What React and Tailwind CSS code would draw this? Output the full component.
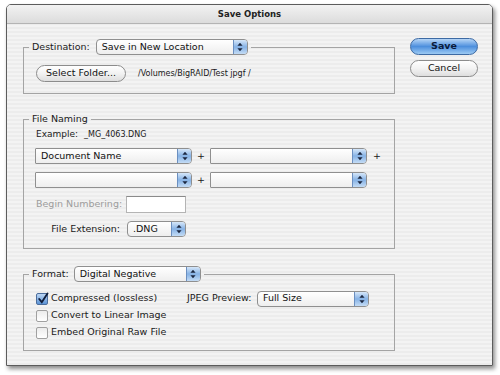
import React from "react";

function Arrows() {
  return (
    <svg width="6" height="10" viewBox="0 0 6 10">
      <path d="M3 0.8 L5.6 3.8 H0.4Z M3 9.2 L5.6 6.2 H0.4Z" fill="#1b2740" />
    </svg>
  );
}

function Popup({ className, text, square }) {
  return (
    <div
      className={`flex items-stretch overflow-hidden border border-[#8f8f8f] bg-linear-to-b from-white to-[#eeeeee] ${
        square ? "rounded-l-[1px] rounded-r-[4px]" : "rounded-[4px]"
      } ${className}`}
    >
      <div className="flex-1 flex items-center pl-[5px] whitespace-nowrap text-[#111]">{text}</div>
      <div className="w-[14px] flex items-center justify-center border-l border-[#6b8fc0] bg-linear-to-b from-[#d6e7f9] via-[#86b2e5] to-[#c4dcf5]">
        <Arrows />
      </div>
    </div>
  );
}

function Check({ checked }) {
  if (checked)
    return (
      <div className="relative w-[12px] h-[12px] rounded-[2px] border border-[#4b6d9c] bg-linear-to-b from-[#bcd6f3] to-[#5b93d6]">
        <svg className="absolute left-[0px] top-[-2px]" width="12" height="13" viewBox="0 0 12 13">
          <path d="M2.2 7 L4.8 10.2 L10.5 1.5" fill="none" stroke="#0f1d3a" strokeWidth="1.9" strokeLinecap="round" />
        </svg>
      </div>
    );
  return <div className="w-[12px] h-[12px] rounded-[2px] border border-[#a0a0a0] bg-linear-to-b from-[#ececec] to-white" />;
}

function PillButton({ className, children, blue }) {
  return (
    <div
      className={`flex items-center justify-center rounded-full border ${
        blue
          ? "border-[#3d6aa3] bg-linear-to-b from-[#b7d6f6] via-[#4d8fdd] to-[#9ccaf3] font-bold text-[#0b1b3c]"
          : "border-[#8c8c8c] bg-linear-to-b from-white via-[#f2f2f2] to-[#dedede] text-[#111]"
      } ${className}`}
    >
      {children}
    </div>
  );
}

export default function App() {
  return (
    <div className="w-[500px] h-[375px] bg-white pl-[6px] pt-[4px] font-['DejaVu_Sans',sans-serif] text-[9.5px] text-[#1a1a1a]">
      <div className="w-[487px] h-[362px] flex flex-col border border-[#5c5c5c] rounded-t-[5px] overflow-hidden shadow-[2px_3px_4px_rgba(0,0,0,0.45)]">
        {/* title bar */}
        <div className="h-[19px] flex items-center justify-center border-b border-[#b4b4b4] bg-linear-to-b from-[#f2f2f2] to-[#dcdcdc] font-bold text-[8.5px] text-[#222]">
          Save Options
        </div>

        {/* body */}
        <div className="flex-1 flex pl-[16px] pt-[15px] bg-[repeating-linear-gradient(0deg,#ececec_0px,#ececec_2px,#f3f3f3_2px,#f3f3f3_4px)]">
          <div className="w-[372px] flex flex-col">
            {/* Destination */}
            <fieldset className="border border-[#a4a4a4] pl-[5px] pb-[11px]">
              <legend className="px-[3px]">
                <div className="flex items-center h-[16px]">
                  <span>Destination:</span>
                  <Popup className="ml-[6px] w-[152px] h-[16px]" text="Save in New Location" />
                </div>
              </legend>
              <div className="flex items-center mt-[10px] ml-[7px]">
                <PillButton className="w-[90px] h-[17px]">Select Folder...</PillButton>
                <span className="ml-[12px] text-[8px]">/Volumes/BigRAID/Test jpgf /</span>
              </div>
            </fieldset>

            {/* File Naming */}
            <fieldset className="mt-[19px] border border-[#a4a4a4] pl-[5px] pb-[11px]">
              <legend className="px-[3px] leading-[12px]">File Naming</legend>
              <div className="ml-[6px]">
                <div className="flex items-center h-[12px] mt-[4px] pl-[1px]">
                  <span className="text-[9px]">Example:</span>
                  <span className="ml-[6px] text-[8px]">_MG_4063.DNG</span>
                </div>
                <div className="flex items-center mt-[7px]">
                  <Popup square className="w-[157px] h-[16px]" text="Document Name" />
                  <span className="w-[18px] text-center">+</span>
                  <Popup square className="w-[157px] h-[16px]" text="" />
                  <span className="w-[20px] text-center">+</span>
                </div>
                <div className="flex items-center mt-[8px]">
                  <Popup square className="w-[157px] h-[16px]" text="" />
                  <span className="w-[18px] text-center">+</span>
                  <Popup square className="w-[157px] h-[16px]" text="" />
                </div>
                <div className="flex items-center mt-[8px] pl-[1px]">
                  <span className="w-[90px] text-[#9c9c9c]">Begin Numbering:</span>
                  <div className="w-[60px] h-[17px] bg-white border border-[#b4b4b4] border-t-[#8a8a8a]" />
                </div>
                <div className="flex items-center mt-[8px]">
                  <span className="w-[85px] text-right">File Extension:</span>
                  <Popup className="ml-[7px] w-[59px] h-[16px]" text=".DNG" />
                </div>
              </div>
            </fieldset>

            {/* Format */}
            <fieldset className="mt-[17px] border border-[#a4a4a4] pl-[5px] pb-[9px]">
              <legend className="px-[3px]">
                <div className="flex items-center h-[16px]">
                  <span>Format:</span>
                  <Popup className="ml-[5px] w-[127px] h-[16px]" text="Digital Negative" />
                </div>
              </legend>
              <div className="flex items-start mt-[8px] ml-[7px]">
                <div className="w-[151px] flex flex-col">
                  {[
                    ["Compressed (lossless)", true],
                    ["Convert to Linear Image", false],
                    ["Embed Original Raw File", false],
                  ].map(([label, on]) => (
                    <div key={label} className="h-[17px] flex items-center">
                      <Check checked={on} />
                      <span className="ml-[3px] whitespace-nowrap">{label}</span>
                    </div>
                  ))}
                </div>
                <div className="flex items-center h-[17px]">
                  <span className="w-[70px] whitespace-nowrap">JPEG Preview:</span>
                  <Popup className="w-[112px] h-[16px]" text="Full Size" />
                </div>
              </div>
            </fieldset>
          </div>

          {/* buttons */}
          <div className="ml-[15px] mt-[-1px] flex flex-col">
            <PillButton blue className="w-[68px] h-[17px]">Save</PillButton>
            <PillButton className="mt-[5px] w-[68px] h-[17px]">Cancel</PillButton>
          </div>
        </div>
      </div>
    </div>
  );
}
